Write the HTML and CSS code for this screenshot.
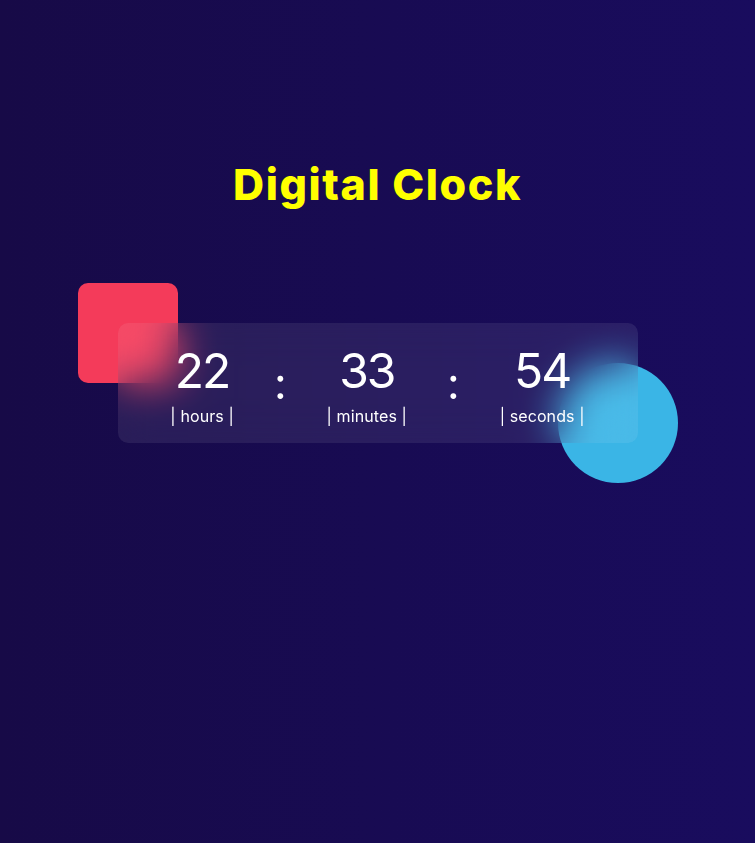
FILE: index.html
```html
<!DOCTYPE html>
<html lang="en">
<head>
<meta charset="utf-8">
<title>Digital Clock</title>
<link rel="stylesheet" href="styles.css">
</head>
<body>
<main class="page">
  <h1 class="title">Digital Clock</h1>
  <div class="stage">
    <div class="shape square"></div>
    <div class="shape circle"></div>
    <div class="clock">
      <div class="unit">
        <span class="num">22</span>
        <span class="label">| hours |</span>
      </div>
      <span class="colon">:</span>
      <div class="unit">
        <span class="num">33</span>
        <span class="label">| minutes |</span>
      </div>
      <span class="colon">:</span>
      <div class="unit">
        <span class="num">54</span>
        <span class="label">| seconds |</span>
      </div>
    </div>
  </div>
</main>
</body>
</html>
```
FILE: styles.css
```css
* { box-sizing: border-box; }
html, body { margin: 0; padding: 0; }
body {
  min-height: 843px;
  background: linear-gradient(to right, #170a47, #190c5e);
  font-family: "Inter", "Open Sans", sans-serif;
  color: #fff;
}
.page {
  display: flex;
  flex-direction: column;
  align-items: center;
  padding-top: 156px;
}
.title {
  margin: 0;
  font-size: 43px;
  line-height: 56px;
  font-weight: 800;
  color: #ffff00;
  letter-spacing: 1.6px;
}
.stage {
  position: relative;
  width: 520px;
  margin-top: 111px;
}
.shape { position: absolute; }
.square {
  left: -40px;
  top: -40px;
  width: 100px;
  height: 100px;
  border-radius: 10px;
  background: #f43b5a;
}
.circle {
  right: -40px;
  bottom: -40px;
  width: 120px;
  height: 120px;
  border-radius: 50%;
  background: #3ab5e6;
}
.clock {
  position: relative;
  height: 120px;
  border-radius: 10px;
  background: rgba(255, 255, 255, 0.08);
  backdrop-filter: blur(20px);
  -webkit-backdrop-filter: blur(20px);
  display: flex;
  justify-content: center;
  align-items: center;
  gap: 40px;
}
.unit {
  display: flex;
  flex-direction: column;
  align-items: center;
}
.num {
  font-size: 48px;
  font-weight: 400;
  line-height: 56px;
  letter-spacing: -2px;
  margin-top: 2px;
}
.label {
  font-size: 16px;
  line-height: 20px;
  margin-top: 7px;
  letter-spacing: 0.1px;
}
.colon {
  font-size: 44px;
  line-height: 56px;
  margin-top: 0;
}
```
